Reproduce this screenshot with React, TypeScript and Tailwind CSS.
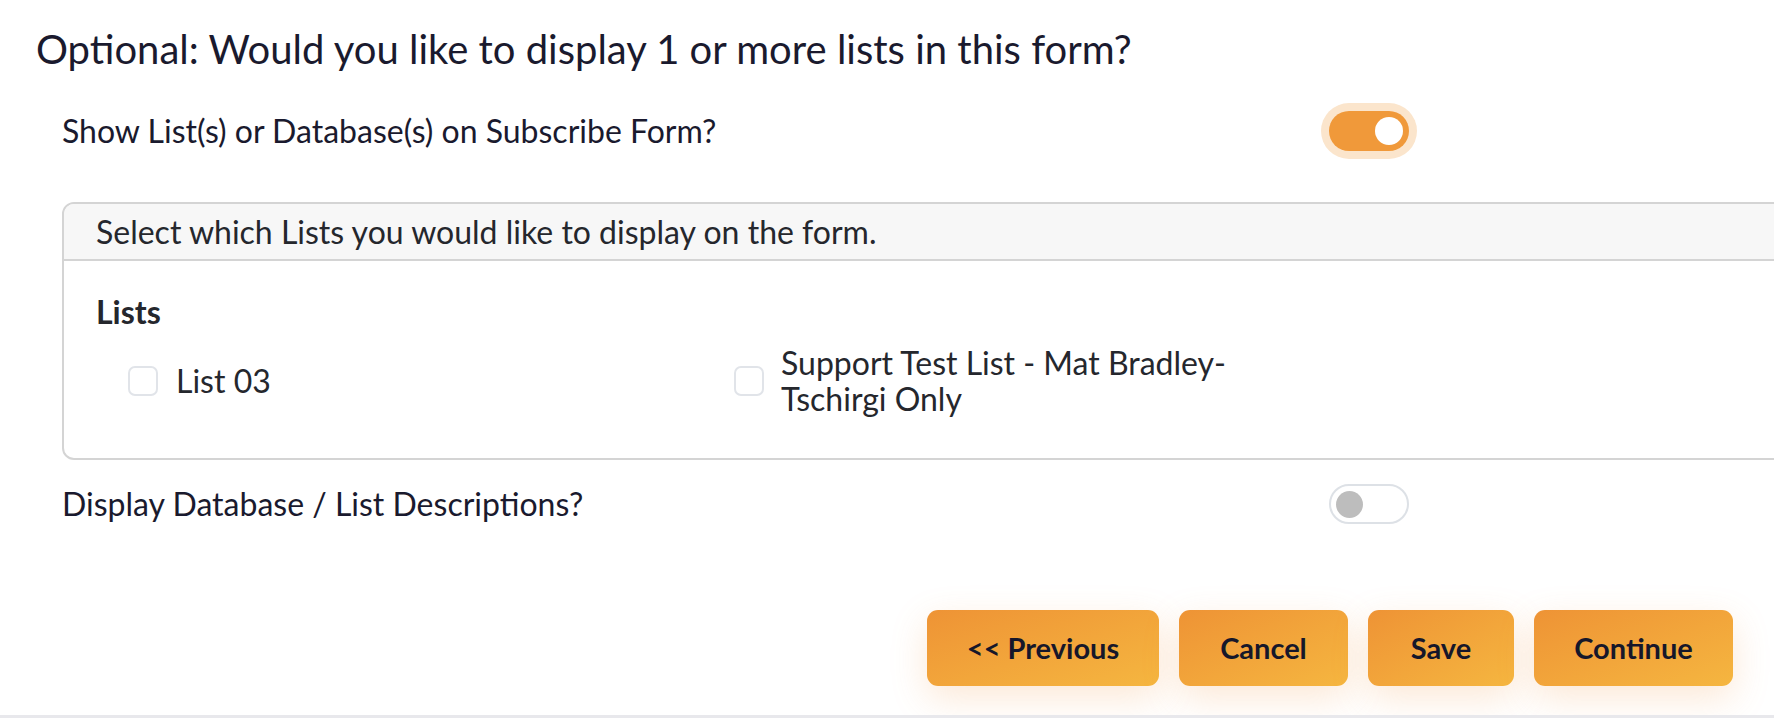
function Toggle({ on }: { on: boolean }) {
  if (on) {
    return (
      <div className="relative flex h-[40px] w-[80px] items-center justify-end rounded-full bg-[#f0993a] pr-[6px] shadow-[0_0_0_8px_#fbe5cc]">
        <span className="h-[28px] w-[28px] rounded-full bg-white" />
      </div>
    );
  }
  return (
    <div className="flex h-[40px] w-[80px] items-center rounded-full border-2 border-[#dde1e6] bg-white pl-[5px]">
      <span className="h-[27px] w-[27px] rounded-full bg-[#bdbdbd]" />
    </div>
  );
}

function Checkbox() {
  return <span className="h-[30px] w-[30px] shrink-0 rounded-[7px] border-2 border-[#e1e4e9] bg-white" />;
}

export default function App() {
  const buttons = [
    { label: "<< Previous", w: "w-[232px]" },
    { label: "Cancel", w: "w-[169px]" },
    { label: "Save", w: "w-[146px]" },
    { label: "Continue", w: "w-[199px]" },
  ];

  return (
    <div
      className="flex h-[718px] w-full flex-col overflow-hidden border-b-[3px] border-[#e8e8ec] bg-white pt-[25px] text-[#1a1a2e]"
      style={{ fontFamily: "Lato, 'Noto Sans', sans-serif" }}
    >
      {/* Heading */}
      <h2 className="pl-[36px] text-[40px] leading-[48px]">Optional: Would you like to display 1 or more lists in this form?</h2>

      <div className="pl-[62px]">
        {/* Show lists toggle */}
        <div className="mt-[30px] flex h-[56px] items-center">
          <span className="w-[1267px] text-[32px] leading-[38px]">Show List(s) or Database(s) on Subscribe Form?</span>
          <Toggle on />
        </div>

        {/* Lists card */}
        <div className="mt-[43px] w-[1760px] rounded-[12px] border-2 border-[#d4d4d4] text-[#25272d]">
          <div className="flex h-[57px] items-center rounded-t-[10px] border-b-2 border-[#d4d4d4] bg-[#f7f7f7] px-8">
            <span className="text-[32px] leading-[38px]">Select which Lists you would like to display on the form.</span>
          </div>
          <div className="px-8 pb-[41px] pt-[32px]">
            <div className="text-[32px] font-bold leading-[38px]">Lists</div>
            <div className="mt-[14px] grid grid-cols-[606px_606px_1fr] items-center pl-8">
              <label className="flex items-center gap-[18px]">
                <Checkbox />
                <span className="text-[32px] leading-[36px]">List 03</span>
              </label>
              <label className="flex items-center gap-[17px]">
                <Checkbox />
                <span className="max-w-[520px] text-[32px] leading-[36px]">Support Test List - Mat Bradley-Tschirgi Only</span>
              </label>
            </div>
          </div>
        </div>

        {/* Descriptions toggle */}
        <div className="mt-[16px] flex h-[56px] items-center">
          <span className="w-[1267px] text-[32px] leading-[38px]">Display Database / List Descriptions?</span>
          <Toggle on={false} />
        </div>
      </div>

      {/* Actions */}
      <div className="mt-[78px] flex justify-end gap-[20px] pr-[41px]">
        {buttons.map((b) => (
          <button
            key={b.label}
            className={`${b.w} flex h-[76px] items-center justify-center rounded-[11px] bg-linear-to-br from-[#ee9335] to-[#f5b640] text-[29px] font-bold text-[#16172a] shadow-[0_12px_36px_rgba(240,150,70,0.22)]`}
          >
            {b.label}
          </button>
        ))}
      </div>
    </div>
  );
}
